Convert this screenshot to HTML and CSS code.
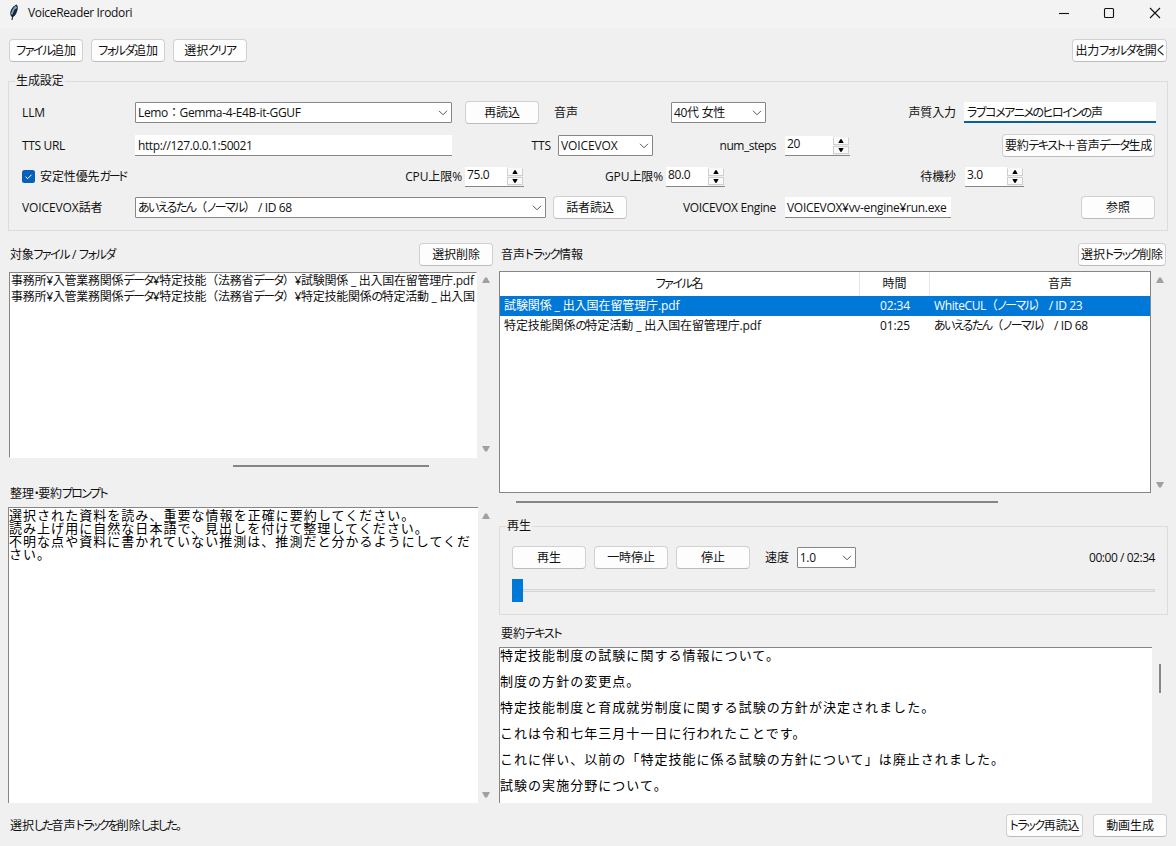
FILE: index.html
```html
<!DOCTYPE html>
<html lang="ja">
<head>
    <meta charset="UTF-8">
    <meta name="viewport" content="width=device-width, initial-scale=1.0">
    <title>VoiceReader Irodori</title>
    <link rel="stylesheet" href="styles.css">
</head>
<body>
    <svg class="defs" width="0" height="0">
        <symbol id="chevron" viewBox="0 0 10 6"><path d="M1 .8 5 4.8 9 .8" fill="none" stroke="#555" stroke-width="1"/></symbol>
        <symbol id="up" viewBox="0 0 8 6"><path d="M3 .5h2L8 6H0z"/></symbol>
        <symbol id="down" viewBox="0 0 8 6"><path d="M0 0h8L5 5.5H3z"/></symbol>
    </svg>

    <header class="titlebar">
        <svg class="feather" width="12" height="17" viewBox="0 0 12 17">
            <path d="M8.500.5c2 1.500 1.500 5 .2 8-1 2.400-2.800 4.500-4.700 4.500C1.800 11.500 1.800 8 3.500 5 5 2.800 6.500 1.200 8.500.5z" fill="#1b2733"/>
            <path d="M8.200 2.500C6.500 4.500 4.800 7.500 4 10.500" fill="none" stroke="#6fa3d0" stroke-width="2.600"/>
            <path d="M7.500 5C5.800 8 4.500 12 4 16" fill="none" stroke="#111" stroke-width="1"/>
        </svg>
        <span class="app-name">VoiceReader Irodori</span>
        <svg class="window-buttons" width="102" height="12" viewBox="0 0 102 12">
            <g fill="none" stroke="#111" stroke-width="1.100">
                <path d="M0 6.500h10"/>
                <rect x="45.500" y="1.500" width="9" height="9" rx="1"/>
                <path d="M91 1l10 10M101 1 91 11"/>
            </g>
        </svg>
    </header>

    <div class="toolbar">
        <button class="button"><span class="k">ファイル</span>追加</button>
        <button class="button"><span class="k">フォルダ</span>追加</button>
        <button class="button">選択<span class="k">クリア</span></button>
        <button class="button open-output">出力<span class="k">フォルダを</span>開<span class="k">く</span></button>
    </div>

    <section class="group settings">
        <h2 class="group-title">生成設定</h2>
        <div class="row row-llm">
            <label>LLM</label>
            <div class="combo">Lemo：Gemma-4-E4B-it-GGUF<svg><use href="#chevron"/></svg></div>
            <button class="button">再読込</button>
            <label>音声</label>
            <div class="combo">40代 女性<svg><use href="#chevron"/></svg></div>
            <label class="right">声質入力</label>
            <div class="entry focused"><span class="k">ラブコメアニメのヒロインの</span>声</div>
        </div>
        <div class="row row-tts">
            <label class="latin">TTS URL</label>
            <div class="entry url">http://127.0.0.1:50021</div>
            <label class="right">TTS</label>
            <div class="combo">VOICEVOX<svg><use href="#chevron"/></svg></div>
            <label class="right num-steps">num_steps</label>
            <div class="spin latin">20<span class="arrows"><i><svg><use href="#up"/></svg></i><i><svg><use href="#down"/></svg></i></span></div>
            <button class="button generate">要約<span class="k">テキスト</span>＋音声<span class="k">データ</span>生成</button>
        </div>
        <div class="row row-guard">
            <label class="check"><svg width="13" height="13" viewBox="0 0 13 13"><rect width="13" height="13" rx="2.500" fill="#0560b6"/><path d="M3.500 6.700 5.600 8.700 9.700 4.600" fill="none" stroke="#fff"/></svg><span>安定性優先<span class="k">ガード</span></span></label>
            <label class="right">CPU上限%</label>
            <div class="spin latin">75.0<span class="arrows"><i><svg><use href="#up"/></svg></i><i><svg><use href="#down"/></svg></i></span></div>
            <label class="right">GPU上限%</label>
            <div class="spin latin">80.0<span class="arrows"><i><svg><use href="#up"/></svg></i><i><svg><use href="#down"/></svg></i></span></div>
            <label class="right">待機秒</label>
            <div class="spin latin">3.0<span class="arrows"><i><svg><use href="#up"/></svg></i><i><svg><use href="#down"/></svg></i></span></div>
        </div>
        <div class="row row-speaker">
            <label>VOICEVOX話者</label>
            <div class="combo"><span class="speaker"><span class="k">あいえるたん</span>（<span class="k">ノーマル</span>） / ID 68</span><svg><use href="#chevron"/></svg></div>
            <button class="button">話者読込</button>
            <label class="right latin">VOICEVOX Engine</label>
            <div class="entry engine">VOICEVOX¥vv-engine¥run.exe</div>
            <button class="button browse">参照</button>
        </div>
    </section>

    <main class="panes">
        <div class="left">
            <div class="pane-head">
                <span class="latin">対象<span class="k">ファイル</span> / <span class="k">フォルダ</span></span>
                <button class="button">選択削除</button>
            </div>
            <div class="scroll-area files">
                <div class="listbox">
                    <p>事務所¥入管業務関係<span class="k">データ</span>¥特定技能（法務省<span class="k">データ</span>）¥試験関係 _ 出入国在留管理庁.pdf</p>
                    <p>事務所¥入管業務関係<span class="k">データ</span>¥特定技能（法務省<span class="k">データ</span>）¥特定技能関係<span class="k">の</span>特定活動 _ 出入国</p>
                </div>
                <div class="scrollbar"><svg><use href="#up"/></svg><svg><use href="#down"/></svg></div>
            </div>
            <div class="hscroll"></div>
            <h3 class="prompt-title">整理<span class="k">・</span>要約<span class="k">プロンプト</span></h3>
            <div class="scroll-area prompt">
                <div class="text mono">選択された資料を読み、重要な情報を正確に要約してください。<br>読み上げ用に自然な日本語で、見出しを付けて整理してください。<br>不明な点や資料に書かれていない推測は、推測だと分かるようにしてくだ<br>さい。</div>
                <div class="scrollbar"><svg><use href="#up"/></svg><svg><use href="#down"/></svg></div>
            </div>
        </div>

        <div class="right-pane">
            <div class="pane-head">
                <span>音声<span class="k">トラック</span>情報</span>
                <button class="button delete-track">選択<span class="k">トラック</span>削除</button>
            </div>
            <div class="scroll-area tracks">
                <div class="tree">
                    <div class="tree-row tree-head"><span><span class="k">ファイル</span>名</span><span>時間</span><span>音声</span></div>
                    <div class="tree-row selected"><span>試験関係 _ 出入国在留管理庁.pdf</span><span>02:34</span><span class="speaker">WhiteCUL（<span class="k">ノーマル</span>） / ID 23</span></div>
                    <div class="tree-row"><span>特定技能関係<span class="k">の</span>特定活動 _ 出入国在留管理庁.pdf</span><span>01:25</span><span class="speaker"><span class="k">あいえるたん</span>（<span class="k">ノーマル</span>） / ID 68</span></div>
                </div>
                <div class="scrollbar"><svg><use href="#up"/></svg><svg><use href="#down"/></svg></div>
            </div>
            <div class="hscroll"></div>

            <section class="group player">
                <h2 class="group-title">再生</h2>
                <div class="controls">
                    <button class="button">再生</button>
                    <button class="button">一時停止</button>
                    <button class="button">停止</button>
                    <label>速度</label>
                    <div class="combo latin">1.0<svg><use href="#chevron"/></svg></div>
                    <span class="time">00:00 / 02:34</span>
                </div>
                <div class="slider"><span class="thumb"></span><span class="track"></span></div>
            </section>

            <h3 class="summary-title">要約<span class="k">テキスト</span></h3>
            <div class="scroll-area summary">
                <div class="text mono">
                    <p>特定技能制度の試験に関する情報について。</p>
                    <p>制度の方針の変更点。</p>
                    <p>特定技能制度と育成就労制度に関する試験の方針が決定されました。</p>
                    <p>これは令和七年三月十一日に行われたことです。</p>
                    <p>これに伴い、以前の「特定技能に係る試験の方針について」は廃止されました。</p>
                    <p>試験の実施分野について。</p>
                </div>
                <div class="vthumb"></div>
            </div>
        </div>
    </main>

    <footer class="statusbar">
        <span class="status">選択<span class="k">した</span>音声<span class="k">トラックを</span>削除<span class="k">しました。</span></span>
        <button class="button reload"><span class="k">トラック</span>再読込</button>
        <button class="button">動画生成</button>
    </footer>
</body>
</html>
```

FILE: styles.css
```css
* {
    box-sizing: border-box;
}
body {
    margin: 0;
    width: 1176px;
    height: 846px;
    overflow: hidden;
    background: #f0f0f0;
    color: #111;
    font: 12px/16px "Open Sans", "Noto Sans CJK JP", sans-serif;
    letter-spacing: -0.1px;
    white-space: nowrap;
}
h2, h3, p {
    margin: 0;
    font-size: 12px;
    font-weight: normal;
}
.defs {
    position: absolute;
}
/* proportional kana */
.k {
    font-feature-settings: "palt";
    letter-spacing: -1.4px;
}
.latin {
    letter-spacing: -0.35px;
}

.titlebar {
    display: flex;
    align-items: center;
    height: 28px;
    padding: 0 15px 3px 8px;
    background: #f3f3f3;
}
.app-name {
    margin: 1px 0 0 8px;
    letter-spacing: -0.35px;
}
.window-buttons {
    margin-left: auto;
}

.button {
    display: flex;
    align-items: center;
    justify-content: center;
    flex: none;
    width: 74px;
    height: 23px;
    padding: 0;
    border: 1px solid #d0d0d0;
    border-bottom-color: #bcbcbc;
    border-radius: 4px;
    background: #fdfdfd;
    color: #111;
    font: inherit;
    letter-spacing: inherit;
}
.toolbar {
    display: flex;
    gap: 8px;
    padding: 11px 9px 0;
}
.toolbar .open-output {
    width: 95px;
    margin-left: auto;
}

.group {
    border: 1px solid #dcdcdc;
}
.group-title {
    width: max-content;
    padding: 0 1px;
    background: #f0f0f0;
}
.settings {
    height: 150px;
    margin: 19px 8px 0;
}
.settings .group-title {
    margin: -9px 0 0 6px;
}

.row {
    display: grid;
    align-items: center;
    height: 23px;
    padding-left: 13px;
}
.right {
    text-align: right;
}
.row-llm {
    grid-template-columns: 113px 317px 13px 74px 15px 117px 95px 190px 8px 192px;
    margin-top: 12px;
}
.row-llm > :nth-child(3) { grid-column: 4; }
.row-llm > :nth-child(4) { grid-column: 6; }
.row-llm > :nth-child(5) { grid-column: 7; }
.row-llm > :nth-child(6) { grid-column: 8; }
.row-llm > :nth-child(7) { grid-column: 10; }
.row-tts {
    grid-template-columns: 113px 317px 99px 7px 95px 123px 9px 65px 1fr;
    margin-top: 10px;
    padding-right: 12px;
}
.row-tts > :nth-child(4) { grid-column: 5; }
.row-tts > :nth-child(5) { grid-column: 6; }
.row-tts > :nth-child(6) { grid-column: 8; }
.row-tts .generate {
    width: 153px;
    justify-self: end;
    letter-spacing: -0.3px;
}
.generate .k {
    letter-spacing: -1.5px;
}
.num-steps {
    letter-spacing: -0.5px;
}
.row-guard {
    grid-template-columns: 113px 327px 3px 59px 139px 3px 59px 231px 9px 59px;
    margin-top: 8px;
}
.row-guard > :nth-child(3) { grid-column: 4; }
.row-guard > :nth-child(4) { grid-column: 5; }
.row-guard > :nth-child(5) { grid-column: 7; }
.row-guard > :nth-child(6) { grid-column: 8; }
.row-guard > :nth-child(7) { grid-column: 10; }
.row-speaker {
    grid-template-columns: 113px 411px 7px 74px 149px 9px 166px 1fr;
    margin-top: 8px;
    padding-right: 12px;
}
.row-speaker > :nth-child(3) { grid-column: 4; }
.row-speaker > :nth-child(4) { grid-column: 5; }
.row-speaker > :nth-child(5) { grid-column: 7; }
.row-speaker .browse {
    justify-self: end;
}
.check {
    display: flex;
    align-items: center;
    gap: 5px;
}
.check .k {
    letter-spacing: -2.2px;
}

.combo {
    display: flex;
    align-items: center;
    height: 21px;
    padding: 0 3px 0 2px;
    border: 1px solid #868686;
    border-radius: 1px;
    background: #fff;
}
.row-llm .combo {
    letter-spacing: -0.3px;
}
.row-llm > :nth-child(2) {
    letter-spacing: -0.35px;
}
.combo svg {
    width: 10px;
    height: 6px;
    margin-left: auto;
}
.speaker {
    letter-spacing: -0.4px;
}
.speaker .k {
    letter-spacing: -1.6px;
}
.entry {
    height: 21px;
    padding: 3px 3px 0;
    border-bottom: 1px solid #868686;
    background: #fff;
    overflow: hidden;
}
.entry.url {
    letter-spacing: -0.4px;
}
.entry.focused {
    border-bottom: 2px solid #0560a6;
}
.entry.engine {
    padding: 3px 2px 0;
    letter-spacing: -0.3px;
}
.spin {
    display: flex;
    height: 20px;
    padding: 0 0 0 2px;
    border-bottom: 1px solid #868686;
    background: #fff;
}
.arrows {
    display: grid;
    gap: 1px;
    width: 17px;
    margin-left: auto;
    padding: 1px 1px 1px 0;
    background: #f0f0f0;
}
.arrows i {
    display: grid;
    place-items: center;
    height: 8px;
    border: 1px solid #cfcfcf;
    border-top-color: #f8f8f8;
    background: #fafafa;
}
.arrows i + i {
    border-top-color: #cfcfcf;
}
.arrows svg {
    width: 6px;
    height: 4px;
}

.panes {
    display: flex;
    padding: 12px 8px 0;
    height: 572px;
}
.left {
    width: 491px;
}
.right-pane {
    width: 669px;
}
.pane-head {
    display: flex;
    align-items: center;
    justify-content: space-between;
    height: 23px;
    padding: 0 6px 0 2px;
}
.right-pane .pane-head {
    padding-right: 2px;
}
.delete-track {
    width: 88px;
}
.scroll-area {
    display: flex;
}
.scrollbar {
    display: flex;
    flex-direction: column;
    justify-content: space-between;
    width: 18px;
    padding: 5px;
    fill: #a0a0a0;
}
.scrollbar svg {
    width: 8px;
    height: 6px;
}
.files {
    height: 186px;
    margin: 6px 0 0 1px;
}
.files .scrollbar {
    padding-bottom: 6px;
}
.listbox {
    width: 468px;
    padding: 0 0 0 1px;
    border: 1px solid #fff;
    border-top-color: #868686;
    border-left-color: #868686;
    background: #fff;
    overflow: hidden;
    letter-spacing: -0.25px;
}
.left .hscroll {
    width: 196px;
    height: 2px;
    margin: 7px 0 0 225px;
    background: #868686;
}
.prompt-title {
    margin: 19px 0 0 2px;
}
.prompt-title .k {
    letter-spacing: -1.7px;
}
.prompt {
    height: 296px;
    margin-top: 5px;
}
.prompt .scrollbar {
    padding: 6px 5px 5px 4px;
}
.text {
    border-top: 1px solid #868686;
    border-left: 1px solid #868686;
    background: #fff;
    color: #000;
    overflow: hidden;
}
.mono {
    font: 13px/13px "Noto Sans CJK JP", sans-serif;
    letter-spacing: 1.04px;
}
.prompt .text {
    width: 470px;
}

.tracks {
    height: 222px;
    margin-top: 5px;
}
.tree {
    width: 652px;
    border: 1px solid #868686;
    background: #fff;
}
.tree-row {
    display: grid;
    grid-template-columns: 360px 70px 220px;
    align-items: center;
    height: 20px;
}
.tree-row > span {
    padding-left: 4px;
}
.tree-row > :nth-child(2) {
    padding: 0;
    text-align: center;
}
.tree-head {
    height: 24px;
    text-align: center;
}
.tree-head > span,
.tree-head > :nth-child(2) {
    padding: 4px 0;
    border-right: 1px solid #e5e5e5;
}
.tree-head > span:last-child {
    padding-left: 40px;
    border-right: 0;
}
.selected {
    background: #0078d7;
    color: #fff;
}
.tracks .scrollbar {
    padding-top: 6px;
    padding-bottom: 5px;
}
.right-pane .hscroll {
    width: 482px;
    height: 2px;
    margin: 8px 0 0 17px;
    background: #868686;
}
.player {
    height: 89px;
    margin-top: 23px;
    padding: 0 12px;
}
.player .group-title {
    margin: -9px 0 0 -6px;
}
.controls {
    display: flex;
    align-items: center;
    gap: 8px;
    margin-top: 12px;
}
.controls label {
    margin-left: 7px;
}
.controls .combo {
    width: 59px;
}
.time {
    margin-left: auto;
    letter-spacing: -0.45px;
}
.slider {
    display: flex;
    align-items: center;
    margin-top: 10px;
}
.thumb {
    width: 11px;
    height: 23px;
    background: #0078d7;
}
.track {
    flex: 1;
    height: 3px;
    border: 1px solid #d6d6d6;
    background: #e7eaea;
}
.summary-title {
    margin: 11px 0 0 2px;
}
.summary {
    height: 156px;
    margin-top: 5px;
}
.summary .text {
    width: 653px;
}
.summary p {
    font-size: 13px;
    margin-bottom: 13px;
}
.vthumb {
    width: 2px;
    height: 29px;
    margin: 17px 0 0 7px;
    background: #868686;
}

.statusbar {
    display: flex;
    align-items: center;
    gap: 10px;
    padding: 11px 9px 0 10px;
}
.status .k {
    letter-spacing: -1.9px;
}
.statusbar .reload {
    width: 77px;
    margin-left: auto;
}
```
